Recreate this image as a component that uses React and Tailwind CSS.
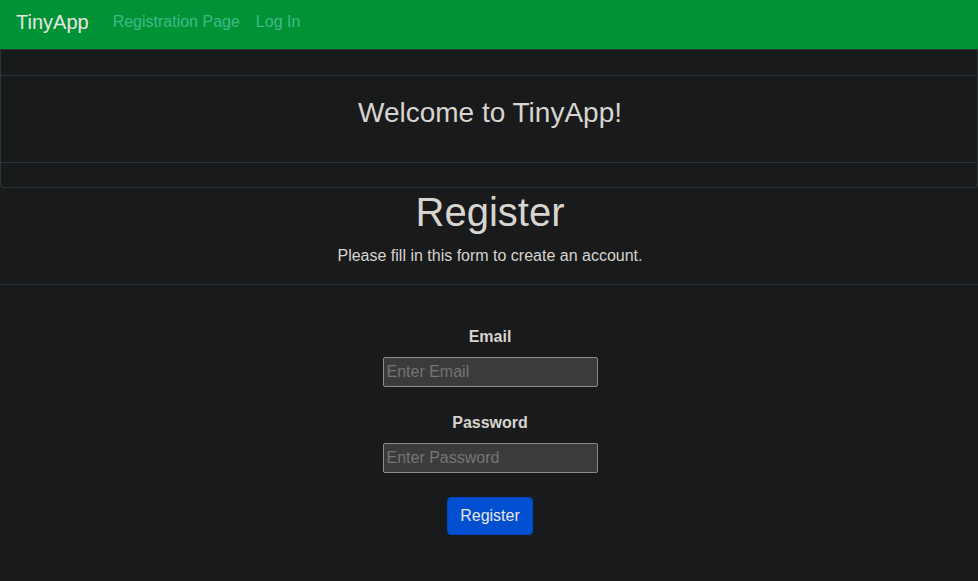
import React from 'react';

const App = () => {
    return (
        <div className="min-h-[581px] bg-[#181a1b] text-[#d8d4cf] font-['Liberation_Sans',Arial,sans-serif]">
            {/* Navbar */}
            <nav className="h-[50px] bg-[#009336] border-b border-[#1f3a29] flex items-center px-4 pb-[6px]">
                <span className="text-[20px] text-[#e8e6e3] mr-[24px] leading-none">TinyApp</span>
                <a className="text-[16px] text-[#40b986] mr-4 leading-none">Registration Page</a>
                <a className="text-[16px] text-[#40b986] leading-none">Log In</a>
            </nav>

            {/* Welcome card */}
            <div className="border border-t-0 border-[#303436] rounded-b-[4px]">
                <div className="h-[26px] border-b border-[#303436]" />
                <div className="h-[87px] pt-[20px] pl-[2px] text-center border-b border-[#303436]">
                    <h3 className="text-[28px] leading-[1.2] text-[#d8d4cf]">Welcome to TinyApp!</h3>
                </div>
                <div className="h-[24px]" />
            </div>

            {/* Register heading */}
            <div className="text-center pl-[2px]">
                <h1 className="text-[40px] leading-[48px] text-[#d8d4cf]">Register</h1>
                <p className="text-[16px] leading-[24px] mt-[8px] text-[#d8d4cf]">
                    Please fill in this form to create an account.
                </p>
            </div>
            <hr className="mt-[16px] border-t border-[#2c2f31]" />

            {/* Form */}
            <form className="flex flex-col items-center pt-[40px] pl-[2px]">
                <label className="font-bold text-[16px] leading-[24px] text-[#d8d4cf]">Email</label>
                <input
                    type="text"
                    placeholder="Enter Email"
                    className="mt-[8px] w-[215px] h-[30px] bg-[#3b3b3b] border border-[#8c8c8c] rounded-[2px] px-[3px] text-[16px] text-[#d8d4cf] placeholder:text-[#757575] outline-none"
                />
                <label className="mt-[24px] font-bold text-[16px] leading-[24px] text-[#d8d4cf]">Password</label>
                <input
                    type="password"
                    placeholder="Enter Password"
                    className="mt-[8px] w-[215px] h-[30px] bg-[#3b3b3b] border border-[#8c8c8c] rounded-[2px] px-[3px] text-[16px] text-[#d8d4cf] placeholder:text-[#757575] outline-none"
                />
                <button
                    type="button"
                    className="mt-[24px] w-[86px] h-[38px] bg-[#004fd1] border border-[#0047bd] rounded-[4px] text-[16px] text-[#e8e6e3]"
                >
                    Register
                </button>
            </form>
        </div>
    );
};

export default App;
